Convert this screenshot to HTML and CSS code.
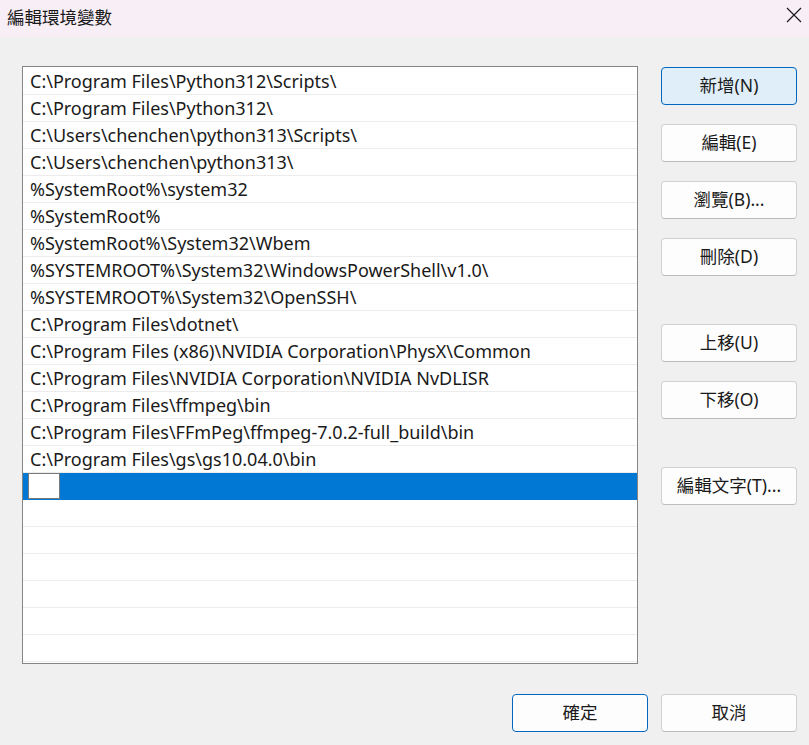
FILE: index.html
```html
<!DOCTYPE html>
<html lang="zh-Hant">
<head>
    <meta charset="UTF-8">
    <meta name="viewport" content="width=device-width, initial-scale=1.0">
    <title>編輯環境變數</title>
    <link rel="stylesheet" href="styles.css">
</head>
<body>
    <div class="titlebar">
        <span class="title">編輯環境變數</span>
        <svg class="close" width="16" height="16" viewBox="0 0 16 16">
            <path d="M1 1 L15 15 M15 1 L1 15" stroke="#1a1a1a" stroke-width="1.2" fill="none"/>
        </svg>
    </div>

    <div class="content">
        <div class="list">
            <div class="row">C:\Program Files\Python312\Scripts\</div>
            <div class="row">C:\Program Files\Python312\</div>
            <div class="row">C:\Users\chenchen\python313\Scripts\</div>
            <div class="row">C:\Users\chenchen\python313\</div>
            <div class="row">%SystemRoot%\system32</div>
            <div class="row">%SystemRoot%</div>
            <div class="row">%SystemRoot%\System32\Wbem</div>
            <div class="row">%SYSTEMROOT%\System32\WindowsPowerShell\v1.0\</div>
            <div class="row">%SYSTEMROOT%\System32\OpenSSH\</div>
            <div class="row">C:\Program Files\dotnet\</div>
            <div class="row">C:\Program Files (x86)\NVIDIA Corporation\PhysX\Common</div>
            <div class="row">C:\Program Files\NVIDIA Corporation\NVIDIA NvDLISR</div>
            <div class="row">C:\Program Files\ffmpeg\bin</div>
            <div class="row">C:\Program Files\FFmPeg\ffmpeg-7.0.2-full_build\bin</div>
            <div class="row">C:\Program Files\gs\gs10.04.0\bin</div>
            <div class="row selected"><span class="editbox"></span></div>
            <div class="row"></div>
            <div class="row"></div>
            <div class="row"></div>
            <div class="row"></div>
            <div class="row"></div>
            <div class="row"></div>
        </div>

        <div class="side">
            <button class="btn primary">新增(N)</button>
            <button class="btn">編輯(E)</button>
            <button class="btn">瀏覽(B)...</button>
            <button class="btn">刪除(D)</button>
            <button class="btn group">上移(U)</button>
            <button class="btn">下移(O)</button>
            <button class="btn group">編輯文字(T)...</button>
        </div>
    </div>

    <div class="footer">
        <button class="btn default">確定</button>
        <button class="btn">取消</button>
    </div>
</body>
</html>
```

FILE: styles.css
```css
body {
    margin: 0;
    width: 809px;
    height: 745px;
    overflow: hidden;
    background-color: #f0f0f0;
    font-family: "Noto Sans", "Noto Sans CJK TC", sans-serif;
    color: #1a1a1a;
}
.titlebar {
    height: 37px;
    background-color: #f7eef6;
    display: flex;
    align-items: center;
    justify-content: space-between;
    padding: 0 7px 0 7px;
    box-sizing: border-box;
}
.title {
    font-family: "Noto Sans CJK TC", sans-serif;
    font-size: 17.5px;
    margin-top: -5px;
}
.close {
    margin-top: -7px;
}
.content {
    display: flex;
    padding: 29px 0 0 22px;
    gap: 23px;
}
.list {
    width: 616px;
    height: 598px;
    box-sizing: border-box;
    border: 1px solid #858585;
    background-color: #fff;
    padding-top: 1px;
    overflow: hidden;
}
.row {
    height: 26px;
    border-bottom: 1px solid #ececec;
    padding-left: 7px;
    font-size: 18px;
    line-height: 26px;
    white-space: nowrap;
    color: #1a1a1a;
}
.row.selected {
    background-color: #0078d4;
    border-bottom-color: #0078d4;
    padding-left: 5px;
    display: flex;
}
.editbox {
    width: 32px;
    height: 26px;
    box-sizing: border-box;
    border: 1px solid #7a7a7a;
    background-color: #fff;
}
.side {
    display: flex;
    flex-direction: column;
    padding-top: 1px;
    gap: 19px;
}
.btn {
    width: 136px;
    height: 38px;
    box-sizing: border-box;
    border: 1px solid #d0d0d0;
    border-bottom-color: #bcbcbc;
    border-radius: 4px;
    background-color: #fdfdfd;
    font-family: "Noto Sans", "Noto Sans CJK TC", sans-serif;
    font-size: 17.5px;
    color: #1a1a1a;
    padding: 0 0 3px 0;
}
.btn.primary {
    background-color: #e0eef9;
    border-color: #0067c0;
}
.btn.default {
    border-color: #0067c0;
}
.btn.group {
    margin-top: 29px;
}
.footer {
    display: flex;
    justify-content: flex-end;
    gap: 13px;
    padding: 30px 12px 0 0;
}
```
